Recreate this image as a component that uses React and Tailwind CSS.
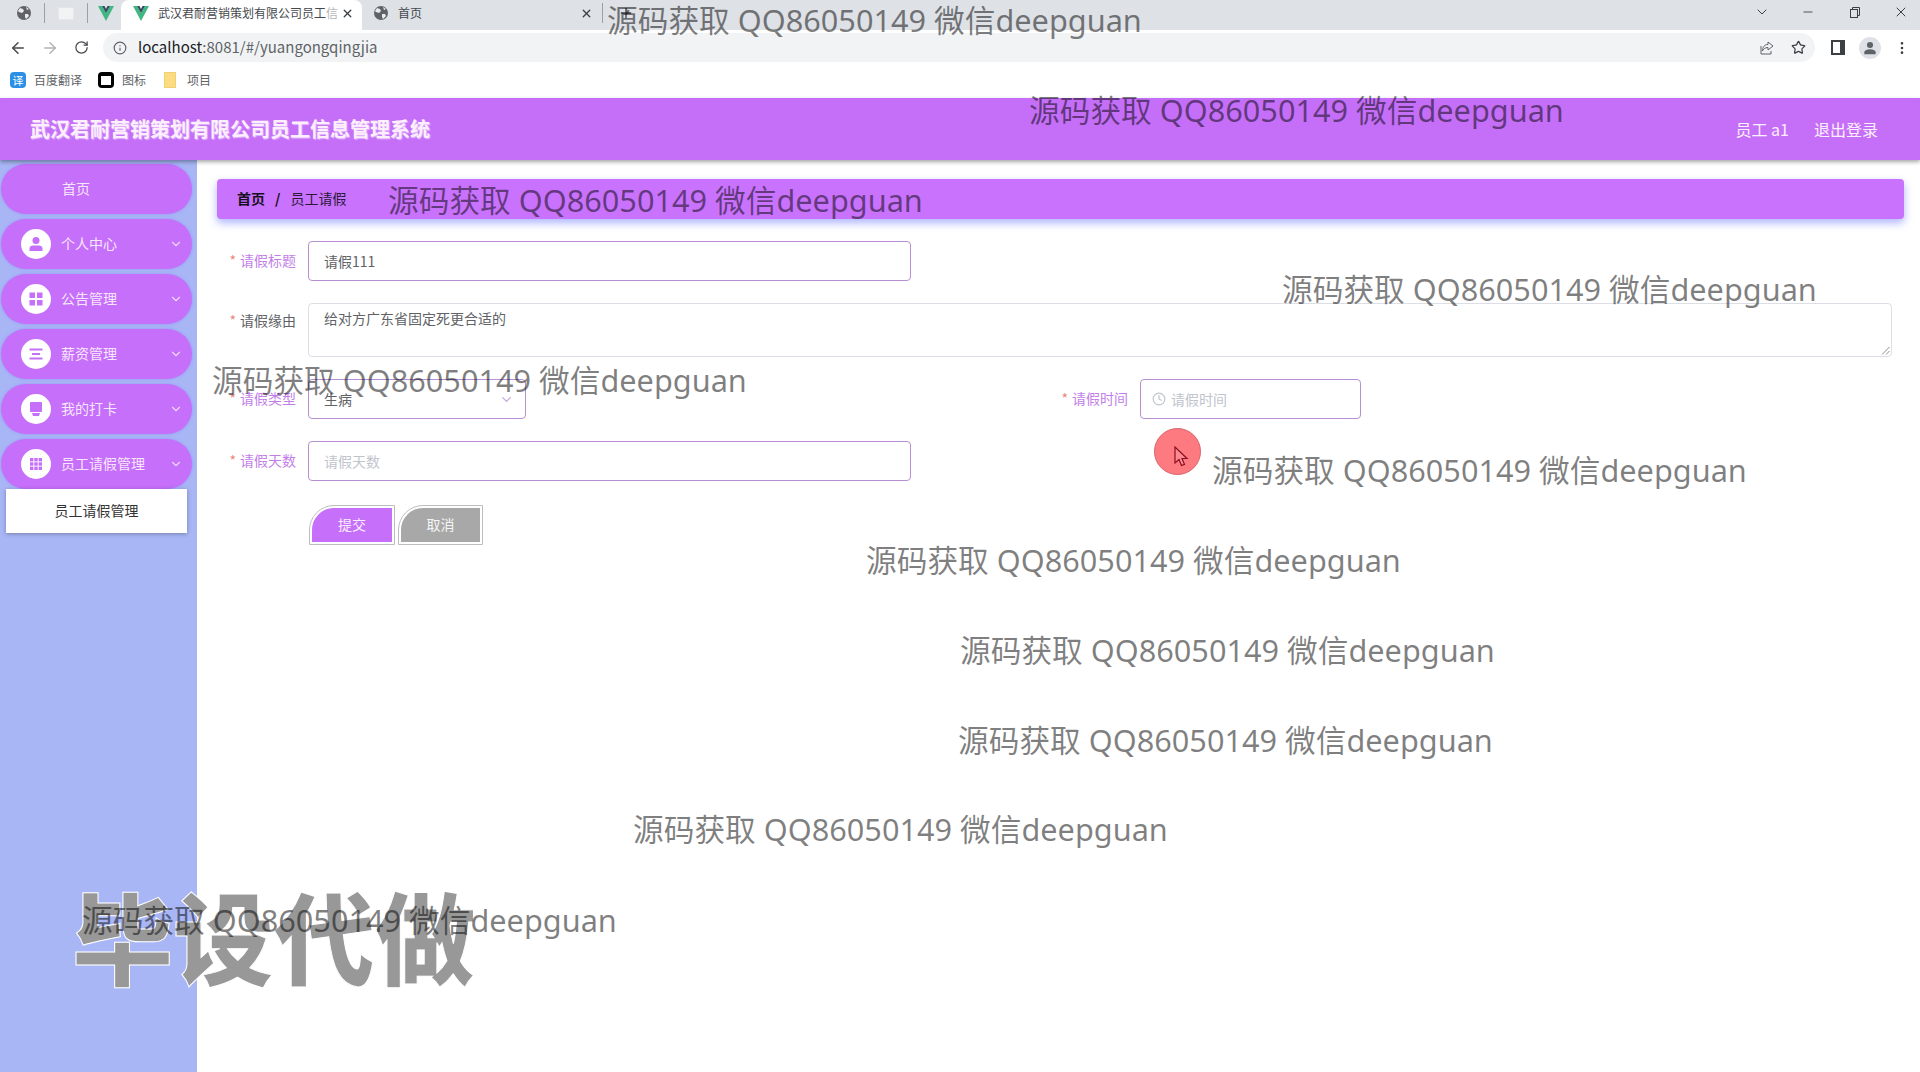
import React from 'react';
import { ArrowLeft, ArrowRight, RotateCw, Info, Star, ChevronDown, Minus, X, Plus, EllipsisVertical, Clock } from 'lucide-react';

const uiFont = { fontFamily: "'Noto Sans CJK SC', sans-serif" };

const Globe = () => (
  <svg width="16" height="16" viewBox="0 0 16 16" className="shrink-0">
    <circle cx="8" cy="8" r="7" fill="#5f6368" />
    <path d="M4 3l3 1 1 2-2 2-3-1-1-1zM9 9l3 0 1 2-3 3-1-2zM10 2l3 2-2 1z" fill="#e8eaed" />
  </svg>
);

const VueLogo = () => (
  <svg width="16" height="15" viewBox="0 0 16 15" className="shrink-0">
    <path d="M0 0h4l4 7 4-7h4L8 15z" fill="#41b883" />
    <path d="M4 0h2.500L8 3l1.500-3H12L8 7z" fill="#35495e" />
  </svg>
);

const MenuIcon = ({ type }) => {
  if (type === 'user') {
    return (
      <svg width="16" height="16" viewBox="0 0 16 16" fill="#c56ffb">
        <circle cx="8" cy="4.500" r="3.500" />
        <path d="M1.500 15v-2.500C1.500 10.500 3 9.500 5 9.500h6c2 0 3.500 1 3.500 3V15z" />
      </svg>
    );
  }
  if (type === 'grid') {
    return (
      <svg width="16" height="16" viewBox="0 0 16 16" fill="#c56ffb">
        <rect x="1.500" y="1.500" width="5.500" height="5.500" />
        <rect x="9" y="1.500" width="5.500" height="5.500" />
        <rect x="1.500" y="9" width="5.500" height="5.500" />
        <rect x="9" y="9" width="5.500" height="5.500" />
      </svg>
    );
  }
  if (type === 'lines') {
    return (
      <svg width="16" height="16" viewBox="0 0 16 16" fill="#c56ffb">
        <rect x="1.500" y="2.500" width="13" height="2" />
        <rect x="4" y="7" width="8" height="2" />
        <rect x="1.500" y="11.500" width="13" height="2" />
      </svg>
    );
  }
  if (type === 'card') {
    return (
      <svg width="16" height="16" viewBox="0 0 16 16" fill="#c56ffb">
        <path d="M3 1h10a1 1 0 0 1 1 1v8a1 1 0 0 1-1 1H3a1 1 0 0 1-1-1V2a1 1 0 0 1 1-1z" />
        <path d="M4 12h8l-1 3H5z" />
      </svg>
    );
  }
  return (
    <svg width="16" height="16" viewBox="0 0 16 16" fill="#c56ffb">
      <rect x="2" y="2" width="3.400" height="3.400" />
      <rect x="6.300" y="2" width="3.400" height="3.400" />
      <rect x="10.600" y="2" width="3.400" height="3.400" />
      <rect x="2" y="6.300" width="3.400" height="3.400" />
      <rect x="6.300" y="6.300" width="3.400" height="3.400" />
      <rect x="10.600" y="6.300" width="3.400" height="3.400" />
      <rect x="2" y="10.600" width="3.400" height="3.400" />
      <rect x="6.300" y="10.600" width="3.400" height="3.400" />
      <rect x="10.600" y="10.600" width="3.400" height="3.400" />
    </svg>
  );
};

const menus = [
  { name: '个人中心', icon: 'user' },
  { name: '公告管理', icon: 'grid' },
  { name: '薪资管理', icon: 'lines' },
  { name: '我的打卡', icon: 'card' },
  { name: '员工请假管理', icon: 'apps' },
];

const FormLabel = ({ text, dark }) => (
  <div className={`w-[80px] shrink-0 pr-3 text-right text-sm whitespace-nowrap ${dark ? 'leading-[34px] text-[#606266]' : 'leading-[38px] text-[#c27fe8]'}`}>
    <span className="text-[#e9877f] mr-1">*</span>
    {text}
  </div>
);

const Field = ({ className, children }) => (
  <div className={`h-10 flex items-center rounded border border-[#b78fd2] bg-white text-sm text-[#606266] ${className}`}>
    {children}
  </div>
);

const marks = [
  'left-[607px] top-[0px]',
  'left-[1029px] top-[90px]',
  'left-[388px] top-[180px]',
  'left-[1282px] top-[269px]',
  'left-[212px] top-[360px]',
  'left-[1212px] top-[450px]',
  'left-[866px] top-[540px]',
  'left-[960px] top-[630px]',
  'left-[958px] top-[720px]',
  'left-[633px] top-[809px]',
  'left-[82px] top-[900px]',
];

const App = () => {
  return (
    <div className="relative w-[1920px] h-[1072px] overflow-hidden flex flex-col bg-white" style={uiFont}>
      {/* browser tabs */}
      <div className="h-[30px] shrink-0 flex items-center bg-[#dee1e6] text-xs text-[#45484d]">
        <div className="w-[121px] h-full flex items-center shrink-0 pl-4 pb-[4px]">
          <Globe />
          <div className="w-px h-5 bg-[#9aa0a6] ml-[12px]" />
          <div className="w-[16px] h-[13px] bg-[#f1f3f4] border border-[#e4e6e9] ml-[13px]" />
          <div className="w-px h-5 bg-[#9aa0a6] ml-[13px]" />
          <div className="ml-[10px]"><VueLogo /></div>
        </div>
        <div className="w-[241px] h-full flex items-center bg-white rounded-t-lg pl-[12px] pb-[4px] shrink-0">
          <VueLogo />
          <span className="ml-[9px] whitespace-nowrap">武汉君耐营销策划有限公司员工<span className="opacity-40">信</span></span>
          <X size={13} strokeWidth={2.500} className="ml-[3px] text-[#3c4043]" />
        </div>
        <div className="w-[240px] h-full flex items-center pl-[11px] pb-[4px] shrink-0">
          <Globe />
          <span className="ml-[9px]">首页</span>
          <X size={13} strokeWidth={2.500} className="ml-auto mr-[9px] text-[#3c4043]" />
        </div>
        <div className="w-px h-5 bg-[#9aa0a6] mb-[4px]" />
        <Plus size={16} className="ml-[15px] mb-[4px] text-[#3c4043]" />
        <div className="ml-auto pb-[6px] flex items-center text-[#3c4043]">
          <ChevronDown size={16} strokeWidth={1.500} className="mr-[31px]" />
          <Minus size={14} strokeWidth={1.500} className="mr-[34px]" />
          <svg width="12" height="12" viewBox="0 0 12 12" fill="none" stroke="#3c4043" className="mr-[32px]">
            <rect x="1.500" y="3.500" width="7" height="8" />
            <path d="M3.500 3.500v-2h7v8h-2" />
          </svg>
          <X size={16} strokeWidth={1.500} className="mr-[11px]" />
        </div>
      </div>

      {/* address bar */}
      <div className="h-[35px] shrink-0 flex items-center bg-white text-[#5f6368]">
        <ArrowLeft size={18} className="ml-[9px] text-[#45484d]" />
        <ArrowRight size={18} className="ml-[14px] text-[#b0b3b8]" />
        <RotateCw size={15} className="ml-[15px] text-[#45484d]" />
        <div className="ml-[14px] w-[1712px] h-[29px] flex items-center rounded-full bg-[#f1f3f4]">
          <Info size={14} className="ml-[10px]" />
          <span className="ml-[11px] text-[15px] text-[#202124]">localhost<span className="text-[#5f6368]">:8081/#/yuangongqingjia</span></span>
          <svg width="16" height="16" viewBox="0 0 16 16" fill="none" stroke="#5f6368" className="ml-auto">
            <path d="M9 2l5 4-5 4V7.500C6 7.500 4.500 9 3.500 11 3.500 7 5.500 4.500 9 4.500zM2 6v8h10v-3" />
          </svg>
          <Star size={15} className="ml-[16px] mr-[9px] text-[#3c4043]" />
        </div>
        <div className="ml-[16px] w-[14px] h-[15px] border-2 border-[#3c4043] border-r-[5px] shrink-0" />
        <div className="ml-[14px] w-[22px] h-[22px] rounded-full bg-[#dee1e6] flex items-center justify-center shrink-0">
          <svg width="14" height="14" viewBox="0 0 16 16" fill="#5f6368">
            <circle cx="8" cy="4.500" r="3.500" />
            <path d="M1.500 15v-2c0-2 2.500-3.500 6.500-3.500s6.500 1.500 6.500 3.500v2z" />
          </svg>
        </div>
        <EllipsisVertical size={16} className="ml-[13px] shrink-0 text-[#3c4043]" />
      </div>

      {/* bookmarks */}
      <div className="h-[33px] shrink-0 flex items-center pb-[4px] bg-white text-xs text-[#5f6368]">
        <div className="ml-[10px] w-[16px] h-[16px] rounded-sm bg-[#2b8fe6] text-white text-[11px] leading-4 text-center">译</div>
        <span className="ml-[8px]">百度翻译</span>
        <div className="ml-[16px] w-[16px] h-[16px] rounded-sm bg-black flex items-end justify-center">
          <div className="w-[10px] h-[9px] bg-white mb-[3px]" />
        </div>
        <span className="ml-[8px]">图标</span>
        <div className="ml-[18px] w-[12px] h-[16px] bg-[#fbdc83] border border-[#f0d070]" />
        <span className="ml-[11px]">项目</span>
      </div>

      {/* system header */}
      <header className="relative z-10 h-[62px] shrink-0 flex items-center justify-between bg-[#c56ff9] shadow-[0_2px_4px_rgba(0,0,0,0.35)] text-[#fdeffd]">
        <h1 className="pl-[30px] text-xl font-bold [text-shadow:1px_1px_1px_rgba(255,255,255,0.5)]">武汉君耐营销策划有限公司员工信息管理系统</h1>
        <div className="flex items-center gap-[25px] pr-[42px] text-base">
          <span>员工 a1</span>
          <span>退出登录</span>
        </div>
      </header>

      <div className="flex-1 flex min-h-0">
        {/* sidebar */}
        <aside className="w-[197px] shrink-0 flex flex-col gap-[5px] bg-[#a8b6f6] pt-[4px] pl-[1px] pr-[5px]">
          <div className="h-[50px] rounded-full bg-[#c56ffb] flex items-center pl-[61px] pb-[2px] text-sm text-[#f8e6fd] shadow-[0_0_3px_rgba(150,120,240,0.6)]">首页</div>
          {menus.map((menu) => (
            <div key={menu.name} className="h-[50px] rounded-full bg-[#c56ffb] flex items-center pl-[20px] text-sm text-[#f8e6fd] shadow-[0_0_3px_rgba(150,120,240,0.6)]">
              <div className="w-[30px] h-[30px] rounded-full bg-white flex items-center justify-center">
                <MenuIcon type={menu.icon} />
              </div>
              <span className="ml-[10px] mb-[2px]">{menu.name}</span>
              <ChevronDown size={14} className="ml-auto mr-[9px] text-[#eed6fd]" />
            </div>
          ))}
          <div className="-mt-[5px] ml-[5px] w-[181px] h-[44px] bg-white flex items-center justify-center pb-[2px] text-sm text-[#333] shadow-[0_1px_4px_rgba(0,0,0,0.3)]">员工请假管理</div>
        </aside>

        {/* main content */}
        <main className="flex-1 min-w-0 pt-[19px] pl-[20px] pr-[16px]">
          <div className="h-10 flex items-center rounded bg-[#c972fd] pl-[20px] pb-[2px] text-sm shadow-[0_4px_8px_rgba(120,130,255,0.6)]">
            <span className="font-bold text-[#161020]">首页</span>
            <span className="mx-[10px] font-bold text-[#161020]">/</span>
            <span className="text-[#2a1a3a]">员工请假</span>
          </div>

          <form className="mt-[22px] flex flex-col">
            <div className="flex pl-[11px]">
              <FormLabel text="请假标题" />
              <Field className="w-[603px] pl-[15px]">请假111</Field>
            </div>
            <div className="flex pl-[11px] mt-[22px]">
              <FormLabel text="请假缘由" dark />
              <div className="relative w-[1584px] h-[54px] rounded border border-[#dcdfe6] px-[15px] py-[4px] text-sm leading-[21px] text-[#606266]">
                给对方广东省固定死更合适的
                <svg width="9" height="9" viewBox="0 0 9 9" stroke="#8a8a8a" className="absolute right-px bottom-px">
                  <path d="M8.500 1L1 8.500M8.500 5L5 8.500" />
                </svg>
              </div>
            </div>
            <div className="grid grid-cols-[832px_1fr] pl-[11px] mt-[22px]">
              <div className="flex">
                <FormLabel text="请假类型" />
                <Field className="w-[218px] pl-[15px] pr-[11px] justify-between">
                  生病
                  <ChevronDown size={15} className="text-[#c9a3e4]" />
                </Field>
              </div>
              <div className="flex">
                <FormLabel text="请假时间" />
                <Field className="w-[221px] pl-[11px] text-[#c0c4cc]">
                  <Clock size={14} />
                  <span className="ml-[5px]">请假时间</span>
                </Field>
              </div>
            </div>
            <div className="flex pl-[11px] mt-[22px]">
              <FormLabel text="请假天数" />
              <Field className="w-[603px] pl-[15px] text-[#c0c4cc]">请假天数</Field>
            </div>
            <div className="flex gap-[5px] pl-[93px] mt-[25px]">
              <button type="button" className="w-[84px] h-[38px] pb-[2px] border-2 border-white outline outline-1 outline-[#bdbdbd] rounded-tl-[24px] bg-[#c56ffb] text-sm text-[#fbeefe]">提交</button>
              <button type="button" className="w-[83px] h-[38px] pb-[2px] border-2 border-white outline outline-1 outline-[#bdbdbd] rounded-tl-[24px] bg-[#a8a8a8] text-sm text-[#f5f5f5]">取消</button>
            </div>
          </form>
        </main>
      </div>

      {/* big stamp */}
      <div className="absolute left-[72px] top-[877px] text-[101px] leading-[115px] font-black whitespace-nowrap text-[#989898] [-webkit-text-stroke:1px_white] pointer-events-none">毕设代做</div>

      {/* mouse highlight */}
      <div className="absolute left-[1154px] top-[428px] w-[47px] h-[47px] rounded-full bg-[#fc7a80] border border-[#d8636b] flex items-center justify-center">
        <svg width="16" height="22" viewBox="0 0 16 22" className="ml-[6px] mt-[10px]">
          <path d="M2 1v16l4-3.500 2.500 6 3-1.200-2.500-5.800h5z" fill="#fc8a90" stroke="#8a1020" strokeWidth="1.200" />
        </svg>
      </div>

      {/* watermarks */}
      {marks.map((pos) => (
        <div key={pos} className={`absolute z-20 ${pos} text-[30.7px] leading-[40px] whitespace-nowrap text-black/50 pointer-events-none`} style={{ fontFamily: "'Noto Sans', 'Noto Sans CJK SC', sans-serif" }}>
          源码获取 QQ86050149 微信deepguan
        </div>
      ))}
    </div>
  );
};

export default App;
